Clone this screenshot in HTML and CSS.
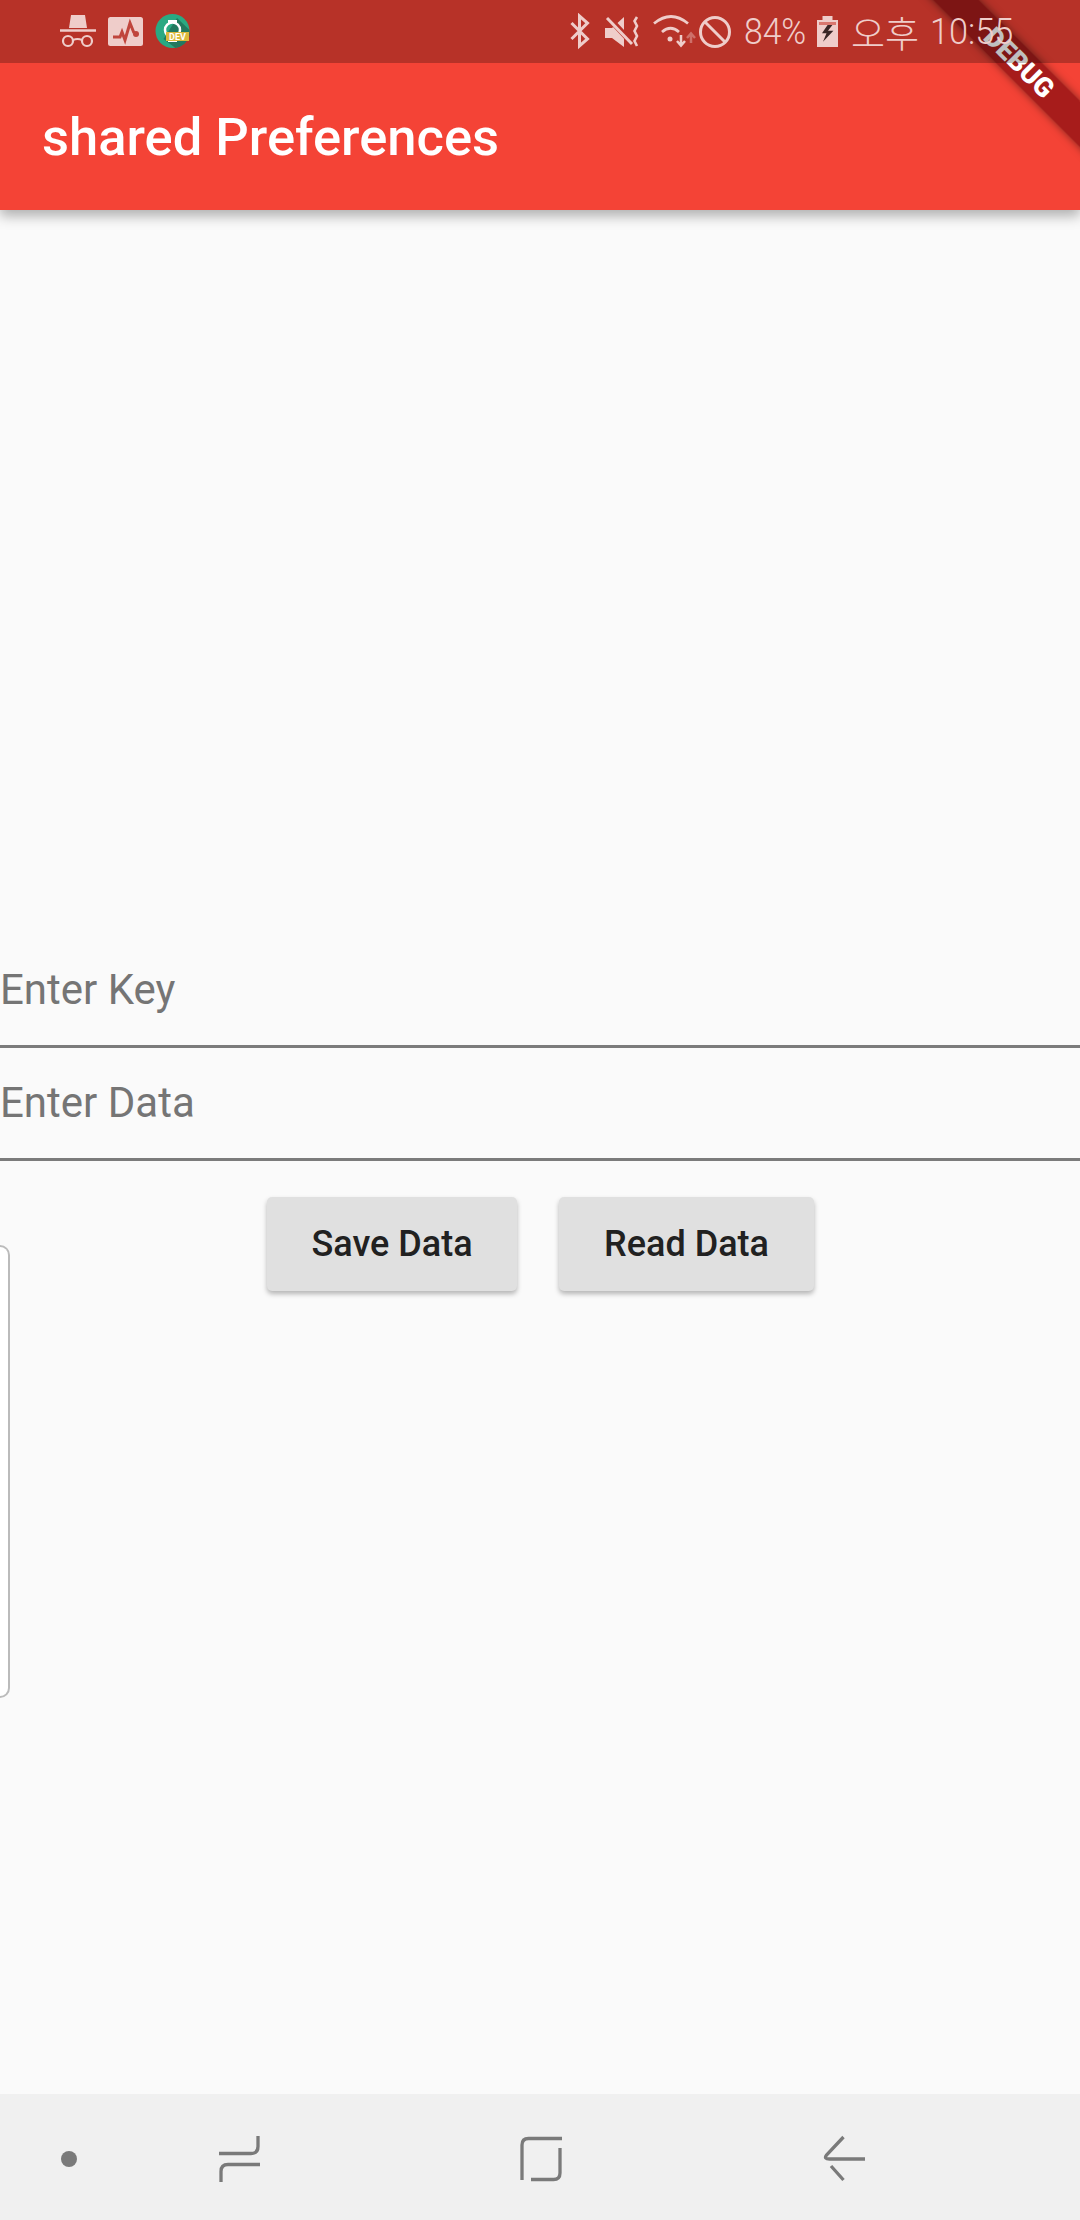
FILE: index.html
```html
<!DOCTYPE html>
<html lang="en">
<head>
<meta charset="utf-8">
<title>shared Preferences</title>
<link rel="stylesheet" href="styles.css">
</head>
<body>
<div class="screen">
  <div class="status">
    <div class="status-left">
      <svg class="ico w36" viewBox="60 13 36 38"><path class="fill" d="M71 15h14l2 13h-18z"/><path class="line" d="M60 30.500h36" stroke-width="2.500"/><circle class="line" cx="68" cy="41" r="5" stroke-width="2.200"/><circle class="line" cx="87" cy="41" r="5" stroke-width="2.200"/><path class="line" d="M73 40q4.500-2 9 0" stroke-width="2"/></svg>
      <svg class="ico w35" viewBox="108 13 35 38"><rect class="fill" x="108" y="17" width="35" height="29" rx="2.500"/><path class="pulse" d="M113 37h7l2-5 3 8 5-17 4 10"/><circle class="pulse-dot" cx="136" cy="34" r="3"/></svg>
      <svg class="ico w35" viewBox="155 13 35 38"><circle cx="172.500" cy="31" r="17" fill="#2aa982"/><path d="M177 18l12.500 12v6a17 17 0 0 1-14 12l-12-9z" fill="#23795e"/><path d="M168 20h9v3h-9zM168 39h9v3h-9z" fill="#fff"/><circle cx="172.500" cy="30" r="7.500" fill="none" stroke="#fff" stroke-width="2.500"/><rect x="166" y="32" width="23" height="9" fill="#dcb93c"/><text x="177.500" y="39.800" class="dev">DEV</text></svg>
    </div>
    <div class="status-right">
      <svg class="ico w20" viewBox="570 13 20 38"><path class="line" d="M571.500 23l16 16-8 7V16l8 7-16 16" stroke-width="3"/></svg>
      <svg class="ico w36 m14" viewBox="604 13 36 38"><path class="fill" d="M605 28h7l12-11v30l-12-9h-7z"/><path d="M606 15l27 29" stroke="#b73229" stroke-width="6" fill="none"/><path class="line" d="M607 18l25 26" stroke-width="3"/><path class="line" d="M637 17l-2.500 4 2.500 5-2.500 5 2.500 5-2.500 5 2.500 5" stroke-width="2.600"/></svg>
      <svg class="ico w45 m12" viewBox="652 13 46 38"><path class="line" d="M654 23.500q17-14 34 0" stroke-width="2.800"/><path class="line" d="M662 32q8.500-7.500 17 0" stroke-width="2.800"/><circle class="fill" cx="670" cy="39" r="2.500"/><path class="arrow" d="M681 35v10M677 41l4 4.500 4-4.500" stroke-width="2.500"/><path class="arrow faint" d="M691 43v-9M687 38l4-4.500 4 4.500" stroke-width="2.500"/></svg>
      <svg class="ico w34" viewBox="699 13 34 38"><circle class="line" cx="716" cy="32" r="14.500" stroke-width="3"/><path class="line" d="M706 22l20 20" stroke-width="3"/></svg>
      <span class="st-text pct">84%</span>
      <svg class="ico w21" viewBox="818 13 21 38"><path class="fill" d="M823.500 16h10v4h5.500v27h-21V20h5.500z"/><rect x="820" y="22" width="17" height="3" fill="#d9776f"/><path d="M828.600 25L823 33.300h4.500L824 41.700l10.400-11H829l4.400-5.700z" fill="#3a2626"/></svg>
      <span class="st-text ko">오후</span>
      <span class="st-text time">10:55</span>
    </div>
  </div>
  <header class="appbar">
    <h1 class="title">shared Preferences</h1>
    <div class="ribbon"><span class="ribbon-text">DEBUG</span></div>
  </header>
  <main class="content">
    <div class="field"><span class="hint">Enter Key</span></div>
    <div class="field"><span class="hint">Enter Data</span></div>
    <div class="actions">
      <button class="btn" type="button">Save Data</button>
      <button class="btn" type="button">Read Data</button>
    </div>
    <div class="panel"></div>
  </main>
  <nav class="navbar">
    <svg class="nav-ico dot" viewBox="59 2094 20 126"><ellipse cx="69" cy="2159" rx="8" ry="8" fill="#7a7a7a"/></svg>
    <svg class="nav-ico recents" viewBox="218 2094 43 126"><path class="nav-line" d="M219 2153.500h32q7 0 7-7V2136M260 2164.500h-32q-7 0-7 7V2182"/></svg>
    <svg class="nav-ico home" viewBox="520 2094 43 126"><path class="nav-line" d="M522 2180v-35q0-6.500 6.500-6.500H562M560 2148v25q0 6.500-6.500 6.500H531"/></svg>
    <svg class="nav-ico back" viewBox="823 2094 43 126"><path class="nav-line" d="M843.500 2137l-17 18q-3 4 3 4H865M831 2166l12.500 14"/></svg>
  </nav>
</div>
</body>
</html>
```

FILE: styles.css
```css
html, body {
  margin: 0;
  padding: 0;
  background: #fafafa;
}

.screen {
  width: 1080px;
  height: 2220px;
  display: flex;
  flex-direction: column;
  position: relative;
  overflow: hidden;
  font-family: Roboto, "Noto Sans CJK KR", sans-serif;
}

/* status bar: translucent scrim above the app bar and ribbon */
.status {
  position: relative;
  z-index: 3;
  flex: 0 0 63px;
  height: 63px;
  margin-bottom: -63px;
  background: rgba(0, 0, 0, 0.25);
  display: flex;
  align-items: flex-start;
  color: #efcdca;
}

.status-left {
  display: flex;
  gap: 12px;
  margin-left: 60px;
  padding-top: 13px;
}

.status-right {
  display: flex;
  margin-left: 380px;
  padding-top: 13px;
  position: relative;
}

.ico { height: 38px; display: block; flex: none; }
.w20 { width: 20px; }
.w21 { width: 21px; margin-left: 13px; }
.w34 { width: 34px; }
.w35 { width: 35px; }
.w36 { width: 36px; }
.w45 { width: 46px; }
.m12 { margin-left: 12px; }
.m14 { margin-left: 14px; }

.fill { fill: #efcdca; }
.line, .arrow {
  fill: none;
  stroke: #efcdca;
}
.faint { opacity: 0.4; }
.pulse {
  fill: none;
  stroke: #c0453c;
  stroke-width: 3;
}
.pulse-dot { fill: #c0453c; }
.dev {
  font-family: Roboto, sans-serif;
  font-size: 9px;
  font-weight: 700;
  fill: #fff;
  text-anchor: middle;
}

.st-text {
  font-weight: 300;
  font-size: 37px;
  line-height: 38px;
  white-space: nowrap;
  display: block;
  flex: none;
  transform-origin: 0 50%;
}
.pct {
  width: 60px;
  margin-left: 12px;
  transform: scaleX(0.91);
}
.ko {
  width: 67px;
  margin-left: 13px;
  font-family: "Noto Sans CJK KR", sans-serif;
  font-size: 37px;
  font-weight: 300;
}
.time {
  width: 83px;
  margin-left: 12px;
  transform: scaleX(0.925);
}

/* app bar */
.appbar {
  position: relative;
  z-index: 2;
  flex: 0 0 210px;
  height: 210px;
  box-sizing: border-box;
  padding: 63px 0 0 42px;
  background: #f44336;
  box-shadow: 0 6px 12px rgba(0, 0, 0, 0.3);
}

.title {
  margin: 0;
  font-size: 52.500px;
  font-weight: 500;
  line-height: 149px;
  color: #fff;
}

.ribbon {
  position: absolute;
  left: 819px;
  top: 47px;
  width: 400px;
  height: 32px;
  background: rgba(160, 25, 25, 0.92);
  box-shadow: 0 0 9px rgba(0, 0, 0, 0.5);
  transform: rotate(45deg);
  display: flex;
  align-items: center;
  justify-content: center;
}

.ribbon-text {
  font-size: 27px;
  font-weight: 900;
  line-height: 32px;
  color: #fff;
}

/* content */
.content {
  flex: 1;
  display: flex;
  flex-direction: column;
  padding-top: 725px;
  background: #fafafa;
}

.field {
  height: 113px;
  box-sizing: border-box;
  border-bottom: 3px solid #7b7b7b;
  display: flex;
  align-items: center;
}

.hint {
  font-size: 42px;
  line-height: 50px;
  color: #757575;
}

.actions {
  display: flex;
  gap: 42px;
  padding-left: 267px;
  margin-top: 36px;
  position: relative;
  z-index: 1;
}

.btn {
  height: 94px;
  width: 250px;
  padding: 0;
  border: 0;
  border-radius: 5px;
  background: #e0e0e0;
  box-shadow: 0 3px 5px rgba(0, 0, 0, 0.28);
  font-family: Roboto, sans-serif;
  font-size: 36px;
  font-weight: 500;
  color: #212121;
}

.btn + .btn { width: 255px; }

.panel {
  width: 10px;
  height: 453px;
  margin-top: -46px;
  box-sizing: border-box;
  background: #fff;
  border: 2px solid #bbb;
  border-left: 0;
  border-radius: 0 12px 12px 0;
}

/* navigation bar */
.navbar {
  flex: 0 0 126px;
  height: 126px;
  background: #f0f0f0;
  display: flex;
}

.nav-ico { height: 126px; display: block; flex: none; }
.dot { width: 20px; margin-left: 59px; }
.recents { width: 43px; margin-left: 139px; }
.home { width: 43px; margin-left: 259px; }
.back { width: 43px; margin-left: 260px; }

.nav-line {
  fill: none;
  stroke: #7a7a7a;
  stroke-width: 3.300;
}
```
